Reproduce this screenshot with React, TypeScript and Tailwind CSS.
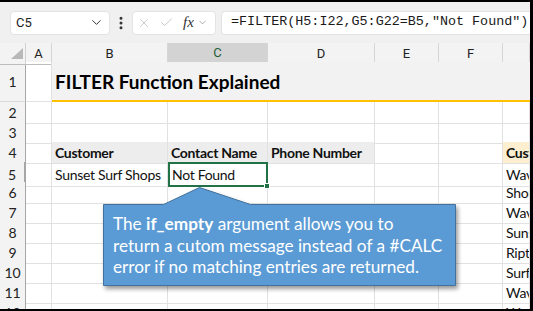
import { Check, ChevronDown, EllipsisVertical, X } from 'lucide-react'

const cols = 'grid grid-cols-[26px_26px_116px_100px_107px_64px_64px_1fr]'
const cellBase = 'border-r border-b border-[#e1e1e1] px-[3px] flex items-center whitespace-nowrap'
const cell = `${cellBase} overflow-hidden`
const rowHead =
  'border-r border-r-[#a6a6a6] border-b border-b-[#dadada] bg-[#f3f3f3] flex items-center justify-center text-[14px] tracking-normal text-[#222]'

const listG = ['Customer', 'Wave Riders', 'Shoreline Surf', 'Wave Masters', 'Sunshine Boards', 'Riptide Rentals', 'Surf City', 'Wave Runners', 'Wavecrest']

function Row({ n, children }: { n: number; children?: React.ReactNode }) {
  const g = listG[n - 4]
  return (
    <div className={`${cols} h-[20px]`}>
      <div className={`${rowHead} ${n === 5 ? 'bg-[#d6d6d6] border-r-2 border-r-[#217346]' : ''}`}>{n}</div>
      {children ?? (
        <>
          <div className={cell} />
          <div className={cell} />
          <div className={cell} />
          <div className={cell} />
          <div className={cell} />
          <div className={cell} />
        </>
      )}
      <div className={`${cell} ${n === 4 ? 'bg-[#fdefd0] font-bold' : ''}`}>{g}</div>
    </div>
  )
}

export default function App() {
  return (
    <div className="relative w-[533px] h-[311px] overflow-hidden bg-white border-t-2 border-r-[3px] border-b-2 border-black font-['Lato',sans-serif] text-[14px] tracking-[-0.3px] text-[#111]">
      {/* formula bar */}
      <div className="h-[41px] bg-[#f0f0f0] flex items-center pl-[10px] font-['Roboto',sans-serif] tracking-normal">
        <div className="w-[100px] h-[24px] bg-white rounded-[4px] border border-[#e3e3e3] flex items-center justify-between px-[5px] text-[13px] text-[#222]">
          <span>C5</span>
          <ChevronDown size={15} strokeWidth={1.6} className="text-[#333]" />
        </div>
        <EllipsisVertical size={16} strokeWidth={2.5} className="text-[#333] ml-[3px]" />
        <div className="ml-[3px] w-[84px] h-[24px] bg-white rounded-[4px] border border-[#e3e3e3] flex items-center px-[4px]">
          <X size={14} strokeWidth={1.2} className="text-[#b5b5b5]" />
          <Check size={15} strokeWidth={1.2} className="text-[#b5b5b5] ml-[8px]" />
          <span className="ml-[9px] font-['Liberation_Serif',serif] italic text-[15px] text-[#333] leading-none">fx</span>
          <ChevronDown size={11} strokeWidth={1.5} className="text-[#888] ml-[3px]" />
        </div>
        <div className="ml-[5px] flex-1 h-[24px] bg-white rounded-l-[4px] border border-r-0 border-[#e3e3e3] flex items-center pl-[9px] font-['Liberation_Mono',monospace] text-[13.4px] text-[#1a1a1a] whitespace-nowrap overflow-hidden">
          =FILTER(H5:I22,G5:G22=B5,"Not Found")
        </div>
      </div>

      {/* column headers */}
      <div className={`${cols} h-[19px] bg-[#f3f3f3] font-['Roboto',sans-serif] tracking-normal text-[13px] text-[#222]`}>
        <div className="border-r border-[#d0d0d0] border-b border-b-[#bdbdbd] relative">
          <svg className="absolute left-[11px] top-[5px]" width="12" height="11" viewBox="0 0 12 11">
            <polygon points="12,0 12,11 0,11" fill="#b8b8b8" />
          </svg>
        </div>
        {['A', 'B', 'C', 'D', 'E', 'F', ''].map((c) => (
          <div
            key={c}
            className={`flex items-center justify-center border-r border-[#d6d6d6] ${
              c === 'C' ? 'bg-[#d3d3d3] border-b-2 border-b-[#217346] text-[#1f5c38]' : 'border-b border-b-[#bdbdbd]'
            }`}
          >
            {c}
          </div>
        ))}
      </div>

      {/* row 1 */}
      <div className={`${cols} h-[40px]`}>
        <div className={rowHead}>1</div>
        <div className={cell} />
        <div className="col-span-6 bg-[#f2f2f2] border-b-2 border-[#ffc000] flex items-end pb-[4px] pl-[3px] font-bold text-[19px] tracking-normal text-black whitespace-nowrap">
          FILTER Function Explained
        </div>
      </div>

      <Row n={2} />
      <Row n={3} />
      <Row n={4}>
        <div className={cell} />
        <div className={`${cell} bg-[#ededed] font-bold`}>Customer</div>
        <div className={`${cell} bg-[#ededed] font-bold`}>Contact Name</div>
        <div className={`${cell} bg-[#ededed] font-bold`}>Phone Number</div>
        <div className={cell} />
        <div className={cell} />
      </Row>
      <Row n={5}>
        <div className={cell} />
        <div className={`${cellBase} overflow-visible`}>Sunset Surf Shops</div>
        <div className="relative border-2 border-[#217346] flex items-center px-[2px] bg-white">
          Not Found
          <div className="absolute right-[-4px] bottom-[-4px] w-[6px] h-[6px] bg-[#217346] border border-white" />
        </div>
        <div className={cell} />
        <div className={cell} />
        <div className={cell} />
      </Row>
      {[6, 7, 8, 9, 10, 11, 12].map((n) => (
        <Row key={n} n={n} />
      ))}

      {/* callout */}
      <div className="absolute left-[100px] top-[182px] w-[362px] h-[110px]">
        <svg width="362" height="110" viewBox="0 0 362 110" className="drop-shadow-[2px_3px_2px_rgba(0,0,0,0.4)]">
          <path d="M3.5 20.5 L63.5 20.5 L99.5 3.5 L150.5 20.5 L355.5 20.5 L355.5 101.5 L3.5 101.5 Z" fill="#5b9bd5" stroke="#41719c" strokeWidth="1" />
        </svg>
        <div className="absolute left-[13px] top-[29px] text-white text-[17.2px] tracking-normal leading-[21.5px] whitespace-nowrap">
          The <b>if_empty</b> argument allows you to
          <br />
          return a cutom message instead of a #CALC
          <br />
          error if no matching entries are returned.
        </div>
      </div>
    </div>
  )
}
